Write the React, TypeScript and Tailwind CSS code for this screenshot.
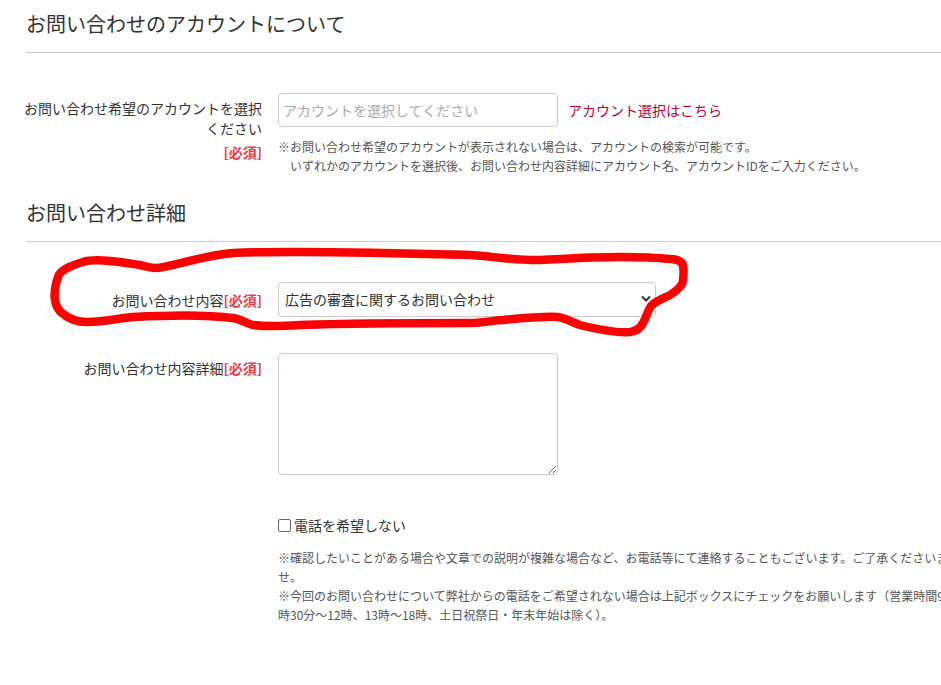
import React from "react";

const font = { fontFamily: '"Noto Sans CJK JP", "Noto Sans", sans-serif' };

const Required = ({ block = false }: { block?: boolean }) => (
  <span className={`${block ? "block mt-1" : ""} font-bold text-[#ee3a4c]`}>[必須]</span>
);

const SectionTitle = ({ children }: { children: React.ReactNode }) => (
  <div>
    <h2 className="text-[20px] leading-[28px] text-[#333] font-normal">{children}</h2>
    <div className="mt-[14px] border-t border-[#cccccc] w-[1100px]" />
  </div>
);

const Lasso = () => (
  <svg
    className="absolute left-0 top-0 pointer-events-none"
    width="941"
    height="685"
    viewBox="0 0 941 685"
  >
    <path
      d="M470 255 C400 253 300 250 233 253 C200 256 175 266 157 268 C150 268 145 266 140 265 C120 262 95 258 83 262 C70 266 60 270 58 277 C55 285 54 295 55 300 C56 306 58 310 62 313 C70 320 78 322 87 322 C105 322 120 318 133 317 C170 315 210 315 233 318 C243 320 248 324 253 325 C270 327 285 326 300 325 C360 323 430 323 470 323 C485 323 495 320 503 320 C525 318 545 316 557 317 C567 318 573 323 580 325 C600 330 618 333 630 332 C638 331 641 327 643 323 C647 316 648 309 652 305 C658 300 664 298 670 295 C678 290 683 285 683 280 C684 272 684 267 682 263 C679 260 675 259 670 259 C650 257 635 257 620 257 C590 257 560 259 537 260 C510 260 490 256 470 255 Z"
      fill="none"
      stroke="#ff0000"
      strokeWidth="8.5"
      strokeLinejoin="round"
    />
  </svg>
);

export default function App() {
  return (
    <div className="relative w-[941px] h-[685px] overflow-hidden bg-white text-[#333]" style={font}>
      <div className="pl-[26px] pt-[10px] w-[1100px]">
        <SectionTitle>お問い合わせのアカウントについて</SectionTitle>

        <div className="mt-[40px] grid grid-cols-[236px_1fr] gap-x-4">
          <div className="-ml-[3px] pt-[5px] text-right text-[14px] leading-[20px]">
            お問い合わせ希望のアカウントを選択ください
            <Required block />
          </div>
          <div>
            <div className="flex items-center gap-[10px]">
              <input
                type="text"
                placeholder="アカウントを選択してください"
                className="w-[280px] h-[34px] border border-[#cccccc] rounded-[4px] px-[4px] text-[14px] placeholder:text-[#aaa] outline-none"
                style={font}
              />
              <a className="text-[14px] text-[#b8003c]">アカウント選択はこちら</a>
            </div>
            <div className="mt-[10px] text-[12px] leading-[19px] text-[#555]">
              <p>※お問い合わせ希望のアカウントが表示されない場合は、アカウントの検索が可能です。</p>
              <p className="pl-[12px]">いずれかのアカウントを選択後、お問い合わせ内容詳細にアカウント名、アカウントIDをご入力ください。</p>
            </div>
          </div>
        </div>

        <div className="mt-[24px]">
          <SectionTitle>お問い合わせ詳細</SectionTitle>
        </div>

        <div className="mt-[40px] grid grid-cols-[236px_1fr] gap-x-4 items-center">
          <div className="text-right text-[14px] leading-[20px]">
            お問い合わせ内容<Required />
          </div>
          <div className="relative w-[378px] h-[35px]">
            <select
              className="appearance-none w-full h-full border border-[#cccccc] rounded-[4px] pl-[6px] text-[14px] text-[#333] bg-white outline-none"
              style={font}
              defaultValue="ad"
            >
              <option value="ad">広告の審査に関するお問い合わせ</option>
            </select>
            <svg
              className="absolute right-[5px] top-[13px] pointer-events-none"
              width="10"
              height="8"
              viewBox="0 0 10 8"
            >
              <path d="M1 1.5 L5 5.5 L9 1.5" fill="none" stroke="#333" strokeWidth="2" />
            </svg>
          </div>
        </div>

        <div className="mt-[36px] grid grid-cols-[236px_1fr] gap-x-4">
          <div className="pt-[5px] text-right text-[14px] leading-[20px]">
            お問い合わせ内容詳細<Required />
          </div>
          <textarea className="w-[280px] h-[122px] border border-[#cccccc] rounded-[4px] outline-none" />
        </div>

        <div className="mt-[40px] grid grid-cols-[236px_1fr] gap-x-4">
          <div />
          <div>
            <label className="flex items-center gap-[3px] text-[14px] leading-[20px]">
              <span className="inline-block w-[13px] h-[13px] border border-[#666] rounded-[2px] bg-white" />
              電話を希望しない
            </label>
            <div className="mt-[13px] w-[672px] text-[12px] leading-[19px] text-[#555]">
              <p>※確認したいことがある場合や文章での説明が複雑な場合など、お電話等にて連絡することもございます。ご了承くださいませ。</p>
              <p>※今回のお問い合わせについて弊社からの電話をご希望されない場合は上記ボックスにチェックをお願いします（営業時間9時30分～12時、13時～18時、土日祝祭日・年末年始は除く）。</p>
            </div>
          </div>
        </div>
      </div>
      <Lasso />
    </div>
  );
}
